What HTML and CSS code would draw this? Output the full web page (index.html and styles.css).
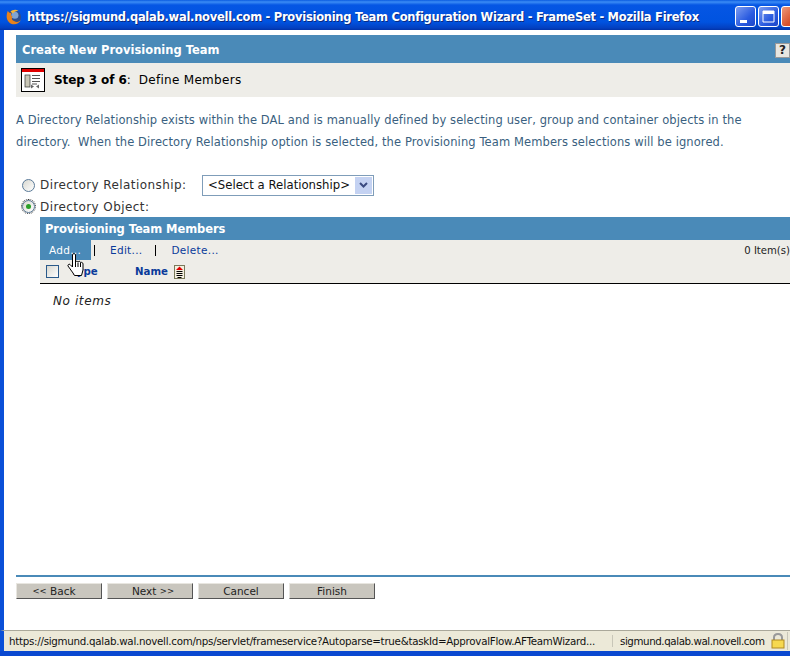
FILE: index.html
```html
<!DOCTYPE html>
<html lang="en">
<head>
<meta charset="utf-8">
<title>Provisioning Team Configuration Wizard</title>
<link rel="stylesheet" href="styles.css">
</head>
<body>
<div class="window">
  <div class="titlebar">
    <svg class="fox" width="16" height="16" viewBox="0 0 18 18"><circle cx="9" cy="9" r="8" fill="#2f4f8e"/><circle cx="10" cy="7" r="4" fill="#7fa4d4"/><path d="M2 2c-2 5-2 10 2 13.500 4 3 10 2 13-3-2 2-5 3-8 1-3-1-3-4-1-5-2 0-3-2-2-4-1 0-3 0-4-2.500z" fill="#e8821c"/><path d="M5 3c2-2 6-3 9-1-2 0-5 1-6 3-1-1-2-1-3-2z" fill="#f4b83c"/></svg>
    <span class="title-text">https://sigmund.qalab.wal.novell.com - Provisioning Team Configuration Wizard - FrameSet - Mozilla Firefox</span>
    <div class="win-btns">
      <span class="win-btn"><svg width="21" height="21" viewBox="0 0 21 21"><rect x="5" y="14" width="7" height="3" fill="#fff"/></svg></span>
      <span class="win-btn"><svg width="21" height="21" viewBox="0 0 21 21"><path d="M5 5h11v11H5z" fill="none" stroke="#fff"/><rect x="5" y="5" width="11" height="3" fill="#fff"/></svg></span>
      <span class="win-btn close"></span>
    </div>
  </div>
  <div class="client">
    <div class="page">
      <div class="head-bar">
        <span>Create New Provisioning Team</span>
        <span class="help">?</span>
      </div>
      <div class="step-bar">
        <svg class="step-icon" width="24" height="24" viewBox="0 0 24 24"><rect x=".5" y=".5" width="23" height="23" fill="#fff" stroke="#000"/><rect x="1" y="1" width="22" height="3" fill="#e00000"/><rect x="4" y="7" width="5" height="12" fill="#c9c6b6" stroke="#333" stroke-width=".7"/><path d="M11 7.500h8M11 10.500h8M11 13.500h8M11 16h5" stroke="#555"/><path d="M13 20l-3-2v4zM15 20l3-2v4z" fill="#666" transform="translate(0 -1.500)"/></svg>
        <span class="step-label"><b>Step 3 of 6</b>:</span>
        <span class="step-name">Define Members</span>
      </div>
      <p class="intro">A Directory Relationship exists within the DAL and is manually defined by selecting user, group and container objects in the directory.&nbsp; When the Directory Relationship option is selected, the Provisioning Team Members selections will be ignored.</p>
      <div class="radio-row first">
        <span class="radio"></span>
        <span class="radio-label">Directory Relationship:</span>
        <div class="select"><span>&lt;Select a Relationship&gt;</span><span class="arrow"><svg width="9" height="7" viewBox="0 0 9 7"><path d="M1 1l3.500 3.500L8 1" fill="none" stroke="#3a4a80" stroke-width="2"/></svg></span></div>
      </div>
      <div class="radio-row second">
        <span class="radio on"><i></i></span>
        <span class="radio-label">Directory Object:</span>
      </div>
      <div class="members">
        <div class="members-title">Provisioning Team Members</div>
        <div class="toolbar">
          <span class="tool active">Add...</span>
          <span class="sep"></span>
          <span class="tool">Edit...</span>
          <span class="sep"></span>
          <span class="tool">Delete...</span>
          <span class="count">0 Item(s)</span>
        </div>
        <div class="col-row">
          <span class="check"></span>
          <span class="col col-type">Type</span>
          <span class="col">Name</span>
          <svg class="sort" width="11" height="14" viewBox="0 0 11 14"><rect x=".5" y=".5" width="10" height="13" fill="#f4f0e0" stroke="#7a7a5a"/><path d="M5.500 1.500L9 5H2z" fill="#e00000"/><path d="M2.500 6.500h6M2.500 8.500h6M2.500 10.500h6M3.500 12.500h4" stroke="#000"/></svg>
        </div>
        <div class="empty">No items</div>
        <svg class="hand" width="19" height="24" viewBox="0 0 19 24"><path d="M5.500 1.500c.5-1 2.500-1 3 0V9c1-1 2-1 2.500 0 1-1 2-1 2.500 .5 1-.5 2.500 0 2.500 1.500v6l-1.500 5.500H7.500L6 20l-5-7c-.5-1 1-2.500 2-1.500l2.500 2.500z" fill="#fff" stroke="#000" stroke-linejoin="round"/><path d="M8.500 9v5M11 9.500v4.500M13.500 10v4" stroke="#000"/></svg>
      </div>
      <div class="footer">
        <div class="buttons">
          <span class="btn back"><span class="chev">&lt;&lt;</span>&nbsp;Back</span>
          <span class="btn next">Next&nbsp;<span class="chev">&gt;&gt;</span></span>
          <span class="btn">Cancel</span>
          <span class="btn">Finish</span>
        </div>
      </div>
    </div>
  </div>
  <div class="statusbar">
    <span class="status-url">https://sigmund.qalab.wal.novell.com/nps/servlet/frameservice?Autoparse=true&amp;taskId=ApprovalFlow.AFTeamWizard...</span>
    <span class="status-host">sigmund.qalab.wal.novell.com</span>
    <svg class="lock" width="14" height="16" viewBox="0 0 14 16"><path d="M3 7V4.500C3 2 5 1 7 1s4 1 4 3.500V7" fill="none" stroke="#9a9a9a" stroke-width="2"/><rect x="1" y="7" width="12" height="8" fill="#f6d84e" stroke="#b08a20"/></svg>
    <span class="status-end"></span>
  </div>
  <div class="bottom-edge"></div>
</div>
</body>
</html>
```
FILE: styles.css
```css
* { box-sizing: border-box; }
html, body { margin: 0; padding: 0; }
body { width: 790px; height: 656px; overflow: hidden; font-family: "DejaVu Sans", Verdana, sans-serif; background: #fff; }
.window { width: 790px; height: 656px; display: flex; flex-direction: column; overflow: hidden; }

.titlebar { height: 30px; flex: none; display: flex; align-items: center; padding: 3px 0 0 6px; background: linear-gradient(#0a5be0 0, #3b8cf5 2px, #0556e4 5px, #0053e0 22px, #0340c0 28px, #0233a8 30px); }
.fox { flex: none; margin-right: 5px; }
.title-text { flex: none; width: 673px; white-space: nowrap; color: #fff; font: bold 11.500px "DejaVu Sans", sans-serif; letter-spacing: -.27px; text-shadow: 1px 1px 0 #0a2a80; }
.win-btns { display: flex; gap: 2px; margin-left: 35px; flex: none; }
.win-btn { width: 21px; height: 21px; border: 1px solid #fff; border-radius: 3px; background: linear-gradient(135deg, #7d9df0, #2a5be0 60%, #1c46c8); display: block; }
.win-btn svg { display: block; margin: -1px; }
.win-btn.close { background: linear-gradient(135deg, #ec9a7c, #d8502a 60%); }

.client { flex: 1; min-height: 0; border-left: 4px solid #0a50d8; background: #fff; overflow: hidden; }
.page { height: 100%; display: flex; flex-direction: column; padding: 5px 0 0 12px; width: 786px; color: #000; }

.head-bar { height: 28px; flex: none; background: #4a8ab8; color: #fff; font-size: 11.500px; font-weight: bold; display: flex; align-items: center; justify-content: space-between; padding: 2px 0 0 6px; }
.help { width: 15px; height: 15px; background: #e8e6e0; border: 1px solid #999; color: #222; font-size: 12px; line-height: 13px; padding-left: 3px; overflow: hidden; }
.step-bar { height: 34px; flex: none; background: #eeede8; display: flex; align-items: center; padding-left: 5px; font-size: 12px; }
.step-icon { flex: none; margin-right: 9px; }
.step-label { margin-right: 8px; letter-spacing: -.1px; }
.step-label b { font-weight: bold; }
.step-name { letter-spacing: .3px; }

.intro { margin: 12px 0 0; font-size: 11.500px; line-height: 22px; color: #3a5f80; width: 745px; letter-spacing: .1px; }

.radio-row { display: flex; align-items: center; height: 21px; padding-left: 6px; font-size: 12px; color: #333; letter-spacing: .42px; }
.radio-row.first { margin-top: 21px; height: 22px; }
.radio { width: 13px; height: 13px; border: 1px solid #5a7a98; border-radius: 50%; background: linear-gradient(135deg, #d8d8d0, #fff); flex: none; margin-right: 5px; display: flex; align-items: center; justify-content: center; }
.radio.on { outline: 1px dotted #333; }
.radio.on i { width: 5px; height: 5px; border-radius: 50%; background: #2aa02a; display: block; }
.radio-label { width: 162px; flex: none; }
.select { width: 172px; height: 21px; border: 1px solid #7f9db9; display: flex; align-items: center; justify-content: space-between; padding: 0 1px 0 5px; font-size: 11.700px; color: #111; flex: none; letter-spacing: 0; }
.arrow { width: 17px; height: 17px; background: #c4d2f2; display: flex; align-items: center; justify-content: center; }

.members { margin: 0 0 0 24px; position: relative; flex: 1; min-height: 0; }
.members-title { height: 23px; background: #4a8ab8; color: #fff; font-size: 11.500px; font-weight: bold; letter-spacing: -.08px; display: flex; align-items: center; padding-left: 5px; }
.toolbar { height: 20px; background: #eeede8; display: flex; align-items: center; font-size: 10.500px; letter-spacing: .3px; color: #0a3a9a; }
.tool { padding: 0 13px 0 15px; }
.tool.active { width: 51px; height: 20px; padding: 0 0 0 9px; margin-right: 3px; background: #4a8ab8; color: #fff; display: flex; align-items: center; }
.sep { width: 1px; height: 11px; background: #000; flex: none; }
.count { margin-left: auto; color: #222; font-size: 10.100px; letter-spacing: 0; white-space: nowrap; }
.col-row { height: 24px; background: #eeede8; border-bottom: 1px solid #000; display: flex; align-items: center; padding-left: 6px; font-size: 10.200px; font-weight: bold; color: #0a3a9a; }
.check { width: 13px; height: 13px; border: 1px solid #2a5a8a; background: linear-gradient(135deg, #d8d8d0, #fff); flex: none; margin-right: 12px; }
.col-type { width: 64px; flex: none; }
.sort { margin-left: 6px; flex: none; }
.empty { font-size: 12px; font-style: italic; color: #222; padding: 10px 0 0 13px; letter-spacing: .6px; }
.hand { position: absolute; left: 27px; top: 36px; }

.footer { flex: none; height: 55px; border-top: 2px solid #4a8ab8; padding-top: 6px; }
.buttons { display: flex; gap: 5px; }
.btn { width: 86px; height: 16px; background: #c9c6be; border-right: 1px solid #555; border-bottom: 1px solid #555; border-top: 1px solid #e8e6e0; border-left: 1px solid #e8e6e0; font-size: 10.500px; color: #222; display: flex; align-items: center; justify-content: center; }
.btn.back { padding-right: 10px; }
.btn.next { padding-left: 6px; }
.chev { font-size: 8.500px; }

.statusbar { height: 21px; flex: none; background: #ece9d8; border-top: 1px solid #aaa89a; border-left: 4px solid #0a50d8; display: flex; align-items: center; font: 10.300px "DejaVu Sans", sans-serif; color: #111; white-space: nowrap; }
.status-url { width: 608px; flex: none; overflow: hidden; padding-left: 5px; letter-spacing: -.28px; }
.status-host { border-left: 1px solid #c8c6b8; padding-left: 7px; width: 159px; flex: none; letter-spacing: -.43px; }
.lock { flex: none; }
.status-end { width: 1px; height: 18px; background: #c8c6b8; margin-left: 2px; flex: none; }
.bottom-edge { height: 5px; flex: none; background: #0a48d0; }
```
